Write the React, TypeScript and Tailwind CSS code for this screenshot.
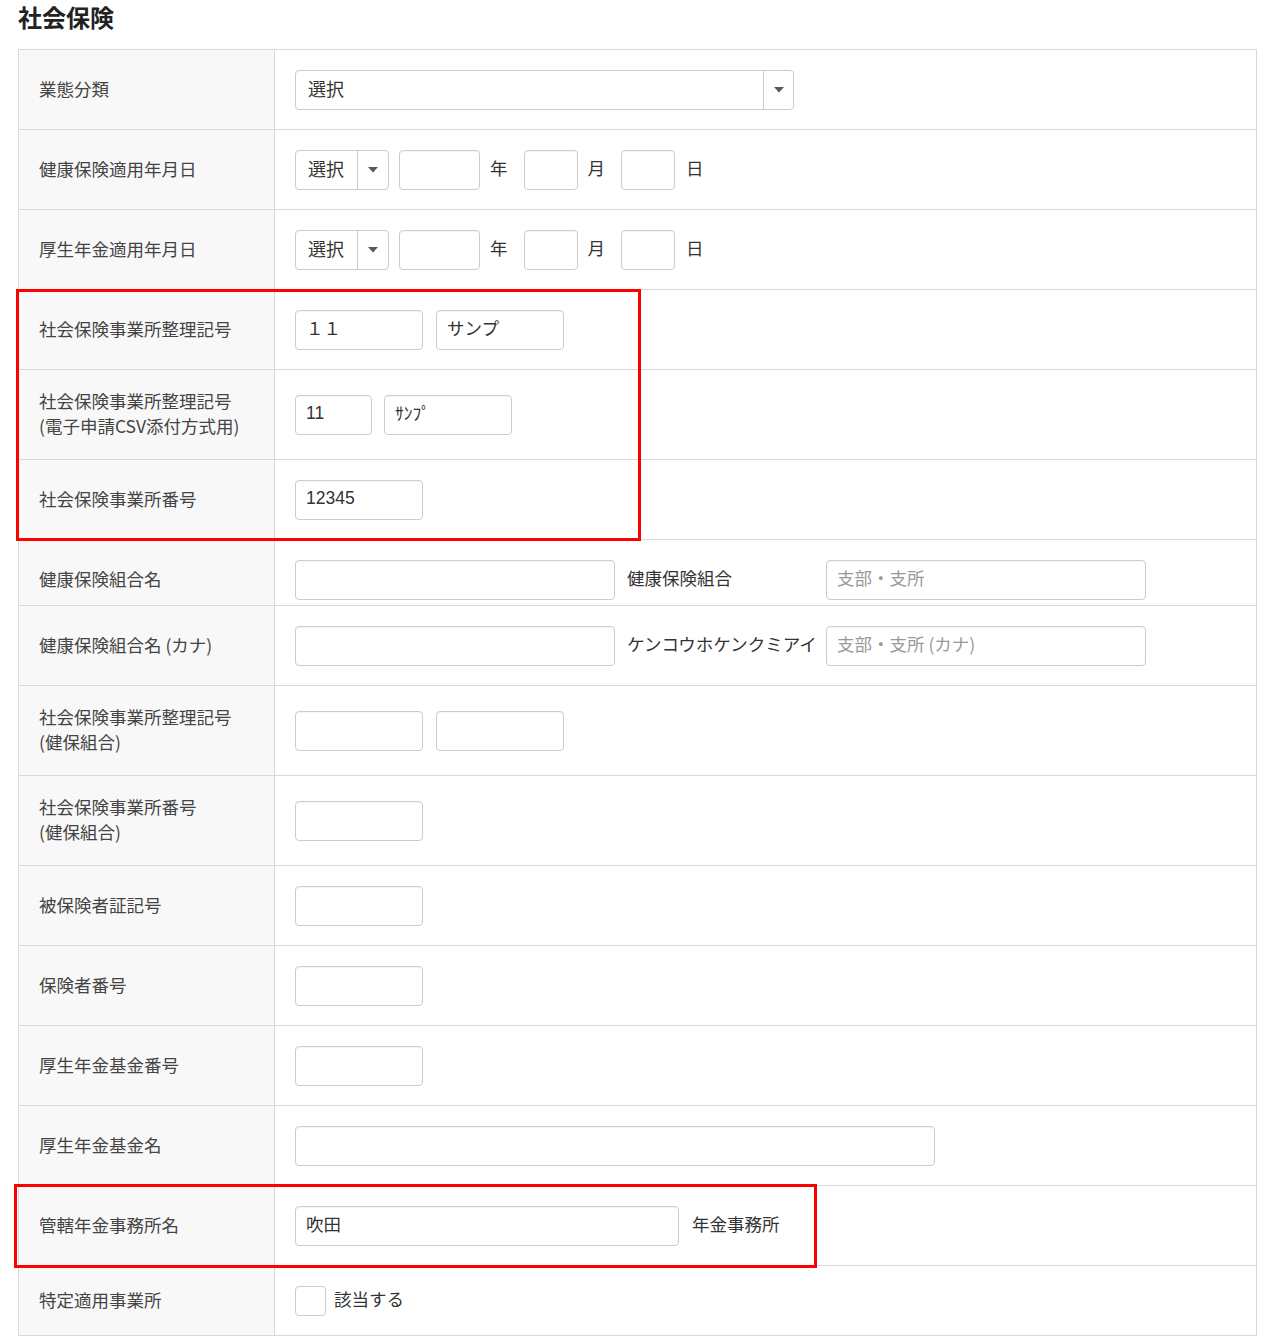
import type { ReactNode } from 'react';

const font = { fontFamily: '"Noto Sans CJK JP", "Noto Sans", sans-serif' };

const inputBase =
  'h-10 rounded-[4px] border border-[#cccccc] bg-white pl-[10px] pr-3 pb-1 flex items-center text-[17.5px] text-[#333] shadow-[inset_0_1px_1px_rgba(0,0,0,0.04)]';

function Caret() {
  return (
    <svg width="10" height="6" viewBox="0 0 10 6" className="text-[#555]">
      <path d="M0 0h10L5 5.5z" fill="currentColor" />
    </svg>
  );
}

function Select({ width, btn }: { width: string; btn: string }) {
  return (
    <div className={`${width} h-10 rounded-[4px] border border-[#cccccc] bg-white flex items-stretch text-[18px] text-[#333]`}>
      <div className="flex-1 flex items-center pl-3 pb-1">選択</div>
      <div className={`${btn} border-l border-[#cccccc] flex items-center justify-center`}>
        <Caret />
      </div>
    </div>
  );
}

function Input({ width, value, placeholder, mono }: { width: string; value?: string; placeholder?: string; mono?: boolean }) {
  return (
    <div className={`${inputBase} ${width}`}>
      {value ? (
        <span style={mono ? { fontFamily: '"Liberation Sans", "Noto Sans CJK JP", sans-serif' } : undefined}>{value}</span>
      ) : placeholder ? (
        <span className="text-[#999]">{placeholder}</span>
      ) : null}
    </div>
  );
}

function Row({
  label,
  children,
  pad = 'pt-5 pb-[19px]',
  minH = 'min-h-10',
  last,
}: {
  label: ReactNode;
  children?: ReactNode;
  pad?: string;
  minH?: string;
  last?: boolean;
}) {
  return (
    <div className={`flex ${last ? '' : 'border-b border-[#d9d9d9]'}`}>
      <div className={`w-[256px] shrink-0 bg-[#f8f8f8] border-r border-[#d9d9d9] pl-5 ${pad} flex items-center text-[17.5px] leading-[25px] text-[#444]`}>
        <div className={`${minH} relative -top-[2px] flex items-center`}>{label}</div>
      </div>
      <div className={`flex-1 pl-5 ${pad} flex items-center text-[17.5px] text-[#333]`}>{children}</div>
    </div>
  );
}

function Unit({ children, className }: { children: ReactNode; className: string }) {
  return <span className={`${className} relative -top-[2px]`}>{children}</span>;
}

function DateRow({ label }: { label: string }) {
  return (
    <Row label={label}>
      <Select width="w-[94px]" btn="w-[31px]" />
      <Input width="w-[81px] ml-[10px]" />
      <Unit className="ml-[10px]">年</Unit>
      <Input width="w-[54px] ml-[16px]" />
      <Unit className="ml-[10px]">月</Unit>
      <Input width="w-[54px] ml-[16px]" />
      <Unit className="ml-[11px]">日</Unit>
    </Row>
  );
}

export default function App() {
  return (
    <div className="bg-white min-h-[1341px] pt-[2px]" style={font}>
      <h2 className="pl-[18px] text-[24px] font-bold leading-[30px] text-[#222]">社会保険</h2>
      <div className="mt-[17px] ml-[18px] w-[1239px] border border-[#d9d9d9]">
        <Row label="業態分類">
          <Select width="w-[499px]" btn="w-[30px]" />
        </Row>
        <DateRow label="健康保険適用年月日" />
        <DateRow label="厚生年金適用年月日" />

        <div className="relative">
          <Row label="社会保険事業所整理記号">
            <Input width="w-[128px]" value="１１" />
            <Input width="w-[128px] ml-[13px]" value="サンプ" />
          </Row>
          <Row label={<span>社会保険事業所整理記号<br />(電子申請CSV添付方式用)</span>}>
            <Input width="w-[77px]" value="11" mono />
            <Input width="w-[128px] ml-[12px]" value="ｻﾝﾌﾟ" />
          </Row>
          <Row label="社会保険事業所番号">
            <Input width="w-[128px]" value="12345" mono />
          </Row>
          <div className="absolute -left-[3px] -top-[1px] w-[625px] h-[252px] border-[3px] border-[#ff0000] pointer-events-none" />
        </div>

        <Row label="健康保険組合名" pad="pt-5 pb-[5px]">
          <Input width="w-[320px]" />
          <Unit className="ml-3 w-[199px] whitespace-nowrap">健康保険組合</Unit>
          <Input width="w-[320px]" placeholder="支部・支所" />
        </Row>
        <Row label="健康保険組合名 (カナ)">
          <Input width="w-[320px]" />
          <Unit className="ml-3 w-[199px] whitespace-nowrap">ケンコウホケンクミアイ</Unit>
          <Input width="w-[320px]" placeholder="支部・支所 (カナ)" />
        </Row>
        <Row label={<span>社会保険事業所整理記号<br />(健保組合)</span>}>
          <Input width="w-[128px]" />
          <Input width="w-[128px] ml-[13px]" />
        </Row>
        <Row label={<span>社会保険事業所番号<br />(健保組合)</span>}>
          <Input width="w-[128px]" />
        </Row>
        <Row label="被保険者証記号">
          <Input width="w-[128px]" />
        </Row>
        <Row label="保険者番号">
          <Input width="w-[128px]" />
        </Row>
        <Row label="厚生年金基金番号">
          <Input width="w-[128px]" />
        </Row>
        <Row label="厚生年金基金名">
          <Input width="w-[640px]" />
        </Row>

        <div className="relative">
          <Row label="管轄年金事務所名">
            <Input width="w-[384px]" value="吹田" />
            <Unit className="ml-[13px]">年金事務所</Unit>
          </Row>
          <div className="absolute -left-[5px] -top-[2px] w-[803px] h-[84px] border-[3px] border-[#ff0000] pointer-events-none" />
        </div>

        <Row label="特定適用事業所" minH="min-h-[30px]" last>
          <div className="w-[31px] h-[30px] rounded-[4px] border border-[#cccccc] bg-white" />
          <Unit className="ml-2">該当する</Unit>
        </Row>
      </div>
    </div>
  );
}
